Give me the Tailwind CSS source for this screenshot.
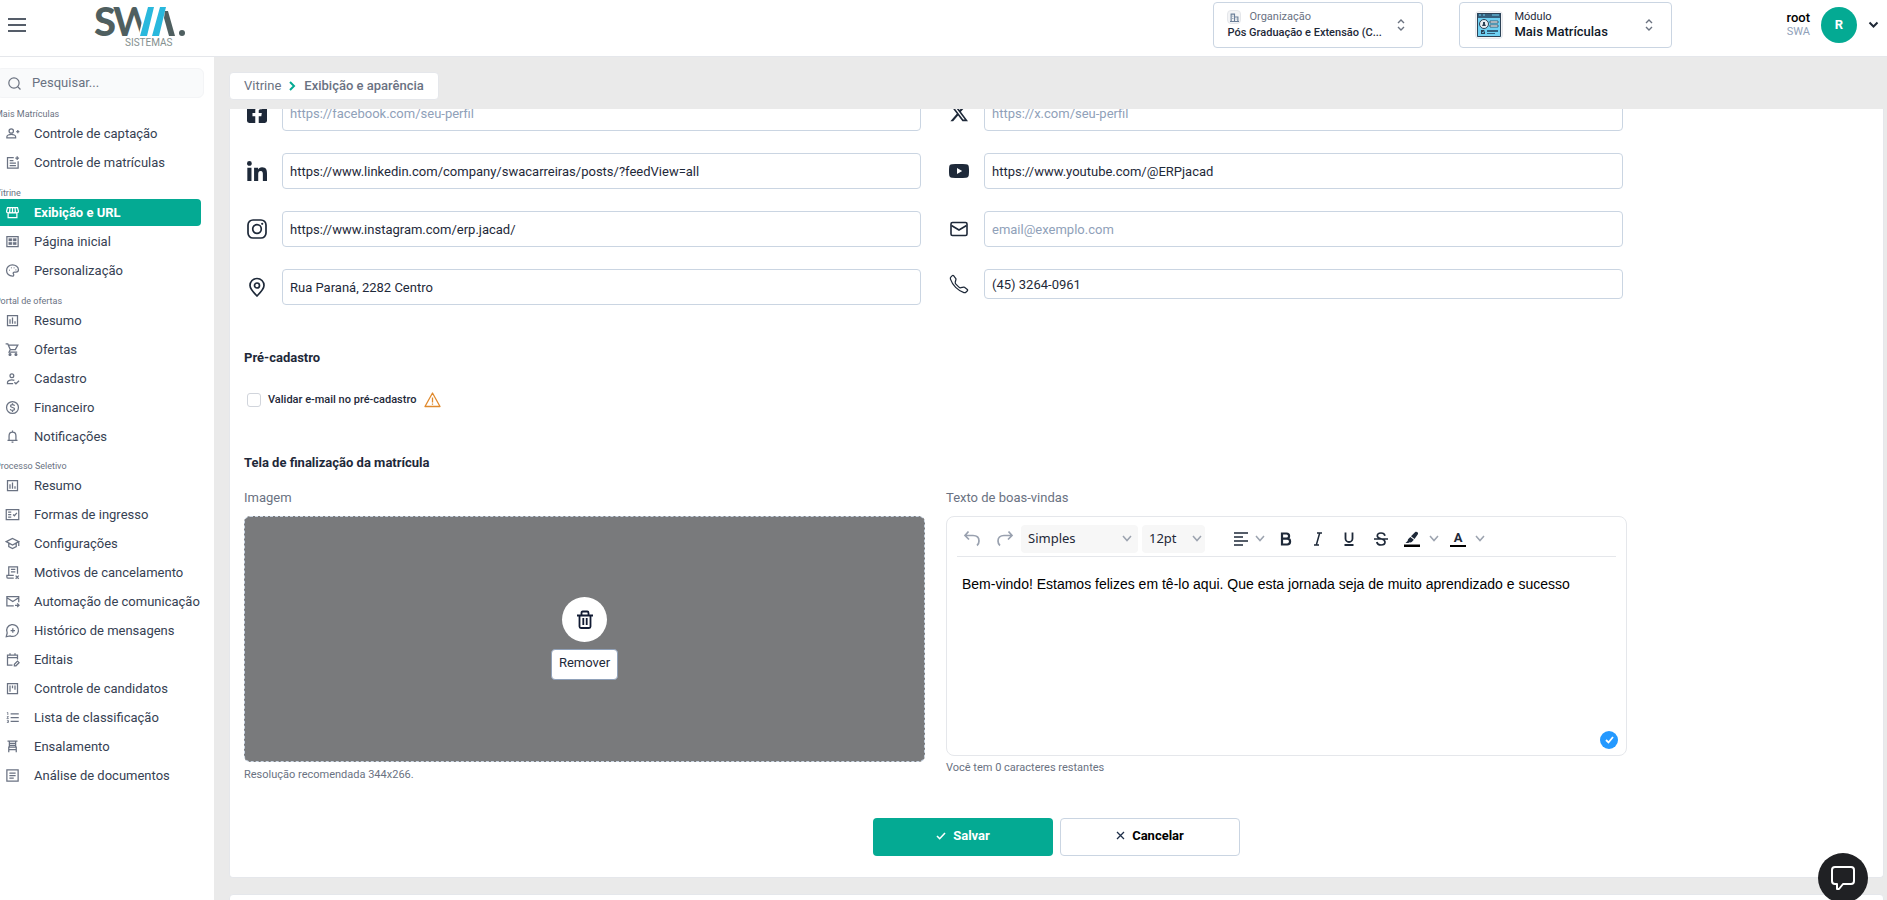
<!DOCTYPE html>
<html lang="pt-BR">
<head>
    <meta charset="UTF-8">
    <meta name="viewport" content="width=device-width, initial-scale=1.0">
    <title>Mais Matrículas - Exibição e aparência</title>

    <!-- Tailwind CSS -->
    <script src="https://cdn.jsdelivr.net/npm/@tailwindcss/browser@4"></script>
</head>
<body class="h-screen overflow-hidden flex flex-col bg-[#eaeaea] font-['Roboto',sans-serif] text-[13px] text-gray-800">

<!-- Header -->
<header class="h-[57px] shrink-0 bg-white border-b border-gray-200 flex items-start pl-2 pr-2">
    <button aria-label="Menu" class="mt-4 text-gray-800">
        <svg class="w-[18px] h-[18px]" viewBox="0 0 18 18" stroke="currentColor" stroke-width="1.5"><path d="M0 3h18M0 9h18M0 15h18"/></svg>
    </button>
    <a href="#" aria-label="SWA Sistemas" class="ml-[68px] mt-1">
        <svg class="w-[94px] h-[44px] overflow-visible" viewBox="0 0 94 44">
            <g fill="#4f5f60" font-family="Lato, sans-serif" font-weight="900">
                <text x="0" y="32" font-size="40">S</text>
                <text x="19" y="32" font-size="40" font-weight="700">W</text>
            </g>
            <path fill="#fff" d="M52 1h22l-11 33H44z"/>
            <path fill="#29b8dd" d="M54 3h6l-7 29h-7zM66 3h6l-7 29h-7z"/>
            <path fill="#4f5f60" d="M71 7l3 0 7 25h-6l-5-18z"/>
            <circle cx="88" cy="29" r="3" fill="#4f5f60"/>
            <text x="31" y="42" font-size="10" fill="#84908f" font-family="Roboto, sans-serif">SISTEMAS</text>
        </svg>
    </a>

    <button class="ml-auto mt-[2px] w-[210px] h-[46px] border border-slate-300 rounded flex items-center justify-between pl-[13px] pr-[17px] text-left">
        <span class="block">
            <span class="flex items-center gap-2 text-[11px] leading-4 text-gray-500">
                <span class="w-[14px] h-[14px] rounded-sm border border-gray-200 bg-gray-100 flex items-center justify-center">
                    <svg class="w-[9px] h-[9px]" viewBox="0 0 16 16" fill="none" stroke="#6b7f99" stroke-width="2"><path d="M2 15V2h6v13M8 7h6v8M0 15h16M5 5v1M5 9v1M11 10v1"/></svg>
                </span>
                Organização
            </span>
            <span class="block text-[11px] leading-4 font-medium text-gray-800">Pós Graduação e Extensão (C...</span>
        </span>
        <svg class="w-2 h-3" viewBox="0 0 8 12" fill="none" stroke="#6b7280" stroke-width="1.4"><path d="M1 4l3-3 3 3M1 8l3 3 3-3"/></svg>
    </button>

    <button class="ml-9 mt-[2px] w-[213px] h-[46px] border border-slate-300 rounded flex items-center pl-[15px] pr-[18px] text-left">
        <span class="w-7 h-7 rounded border border-gray-200 bg-gray-100 flex items-center justify-center">
            <svg class="w-6 h-6" viewBox="0 0 24 24">
                <rect width="24" height="24" rx="1" fill="#6fd0f2"/>
                <path d="M0 0h24v5H0z" fill="#34607d"/>
                <path d="M2 2h2M6 2h2M15 2h7" stroke="#6fd0f2"/>
                <path d="M.5.5h23v23H.5z" fill="none" stroke="#2c4256"/>
                <circle cx="7" cy="11" r="4.5" fill="#e8eef2" stroke="#2c4256"/>
                <path d="M5 13l1-2V9h2v2l1 2z" fill="#2c4256"/>
                <path d="M13 8h8v2h-8zM13 12h8v2h-8z" fill="#fff" stroke="#2c4256" stroke-width=".8"/>
                <path d="M4 17h4v4H4z" fill="#2c4256"/><path d="M5 19l1 1 2-3" fill="none" stroke="#6fd0f2" stroke-width=".8"/>
                <path d="M10 17h11v2H10zM10 20h8v1h-8z" fill="#34607d"/>
            </svg>
        </span>
        <span class="block ml-[11px] mr-auto">
            <span class="block text-[11px] leading-[14px] text-gray-800">Módulo</span>
            <span class="block text-[13px] leading-4 font-medium text-gray-900">Mais Matrículas</span>
        </span>
        <svg class="w-2 h-3" viewBox="0 0 8 12" fill="none" stroke="#6b7280" stroke-width="1.4"><path d="M1 4l3-3 3 3M1 8l3 3 3-3"/></svg>
    </button>

    <button class="ml-[114px] mt-[7px] flex items-center">
        <span class="block text-right">
            <span class="block text-[13px] leading-[14px] font-medium text-black">root</span>
            <span class="block text-[11px] leading-[14px] text-slate-400">SWA</span>
        </span>
        <span class="ml-[11px] w-9 h-9 rounded-full bg-[#04aa93] text-white font-bold flex items-center justify-center">R</span>
        <svg class="ml-[11px] w-[11px] h-2" viewBox="0 0 11 8" fill="none" stroke="#1f2937" stroke-width="2"><path d="M1.500 1.500l4 4 4-4"/></svg>
    </button>
</header>

<div class="flex flex-1 min-h-0">
    <!-- Sidebar -->
    <aside class="w-[214px] shrink-0 bg-white overflow-hidden pt-[11px]">
        <label class="-ml-1 mr-[10px] h-[30px] rounded-md border border-gray-100 bg-gray-50 flex items-center pl-[11px]">
            <svg class="w-[13px] h-[13px] shrink-0" viewBox="0 0 24 24" fill="none" stroke="#6b7280" stroke-width="2.200"><circle cx="11" cy="11" r="9.500"/><path d="M18 18l5 5"/></svg>
            <input type="text" aria-label="Pesquisar" placeholder="Pesquisar..." class="ml-[11px] w-40 bg-transparent outline-none placeholder-gray-500">
        </label>

        <nav class="mt-[11px] text-gray-700">
            <h2 class="-ml-[5px] text-[9px] leading-[11px] text-gray-500">Mais Matrículas</h2>
            <ul class="mr-[13px]">
                <li><a href="#" class="mb-[2px] h-[27px] flex items-center gap-[14px] pl-[5px]">
                    <svg class="w-[15px] h-[15px] text-gray-500" viewBox="0 0 24 24" fill="none" stroke="currentColor" stroke-width="2"><circle cx="10" cy="8" r="3.500"/><path d="M3 19v-2c0-2 4-3.500 7-3.500s7 1.500 7 3.500v2zM18 9h5M20.500 6.500v5"/></svg>
                    Controle de captação</a></li>
                <li><a href="#" class="mb-[2px] h-[27px] flex items-center gap-[14px] pl-[5px]">
                    <svg class="w-[15px] h-[15px] text-gray-500" viewBox="0 0 24 24" fill="none" stroke="currentColor" stroke-width="2"><path d="M14 4H4v17h17V10M7.500 9h6M7.500 13h10M7.500 17h10M19.500 2v6M16.500 5h6"/></svg>
                    Controle de matrículas</a></li>
            </ul>

            <h2 class="mt-3 -ml-[5px] text-[9px] leading-[11px] text-gray-500">Vitrine</h2>
            <ul class="mr-[13px]">
                <li><a href="#" class="mb-[2px] h-[27px] flex items-center gap-[14px] pl-[5px] rounded-r bg-[#04aa93] text-white font-bold">
                    <svg class="w-[15px] h-[15px]" viewBox="0 0 24 24" fill="none" stroke="currentColor" stroke-width="2"><path d="M5 12v8h14v-8M4 4h16l1.500 6c0 1.500-1 2.500-2.500 2.500S16.500 11.500 16.500 10c0 1.500-1 2.500-2.300 2.500S12 11.500 12 10c0 1.500-1 2.500-2.300 2.500S7.500 11.500 7.500 10c0 1.500-1 2.500-2.500 2.500S2.500 11.500 2.500 10zM8 4l-.500 6M12 4v6M16 4l.500 6"/></svg>
                    Exibição e URL</a></li>
                <li><a href="#" class="mb-[2px] h-[27px] flex items-center gap-[14px] pl-[5px]">
                    <svg class="w-[15px] h-[15px] text-gray-500" viewBox="0 0 24 24" fill="none" stroke="currentColor" stroke-width="2"><path d="M3 4h18v16H3z"/><path d="M6 7h5v4H6zM13 7h5v4h-5zM6 13h5v4H6zM13 13h5v4h-5z" fill="currentColor" stroke-width=".5"/></svg>
                    Página inicial</a></li>
                <li><a href="#" class="mb-[2px] h-[27px] flex items-center gap-[14px] pl-[5px]">
                    <svg class="w-[15px] h-[15px] text-gray-500" viewBox="0 0 24 24" fill="none" stroke="currentColor" stroke-width="2"><path d="M12 3C6.500 3 2.500 7 2.500 12s4 9 9.500 9c1.300 0 2-1 2-2 0-1.500-1-1.500-1-2.700s1-1.800 2-1.800h2.500c2.300 0 4-1.500 4-3.800C21.500 6.500 17 3 12 3z"/><path d="M6.500 11.500h1M9.500 7.500h1M14 7.500h1M17 11h1" stroke-width="2.600"/></svg>
                    Personalização</a></li>
            </ul>

            <h2 class="mt-3 -ml-[5px] text-[9px] leading-[11px] text-gray-500">Portal de ofertas</h2>
            <ul class="mr-[13px]">
                <li><a href="#" class="mb-[2px] h-[27px] flex items-center gap-[14px] pl-[5px]">
                    <svg class="w-[15px] h-[15px] text-gray-500" viewBox="0 0 24 24" fill="none" stroke="currentColor" stroke-width="2"><path d="M4 4h16v16H4zM8 10v7M12 7v10M16 13v4"/></svg>
                    Resumo</a></li>
                <li><a href="#" class="mb-[2px] h-[27px] flex items-center gap-[14px] pl-[5px]">
                    <svg class="w-[15px] h-[15px] text-gray-500" viewBox="0 0 24 24" fill="none" stroke="currentColor" stroke-width="2"><path d="M1 3h3.500l4 9h8L20.500 5H6M8.500 12L6.500 16h13"/><circle cx="8" cy="20" r="1.500" fill="currentColor"/><circle cx="17.500" cy="20" r="1.500" fill="currentColor"/></svg>
                    Ofertas</a></li>
                <li><a href="#" class="mb-[2px] h-[27px] flex items-center gap-[14px] pl-[5px]">
                    <svg class="w-[15px] h-[15px] text-gray-500" viewBox="0 0 24 24" fill="none" stroke="currentColor" stroke-width="2"><circle cx="11" cy="7.500" r="3"/><path d="M13 20H4v-2c0-2 3.500-3.800 7-3.800 1.500 0 3 .300 4 .800M15 18l2.500 2.500 5-5"/></svg>
                    Cadastro</a></li>
                <li><a href="#" class="mb-[2px] h-[27px] flex items-center gap-[14px] pl-[5px]">
                    <svg class="w-[15px] h-[15px] text-gray-500" viewBox="0 0 24 24" fill="none" stroke="currentColor" stroke-width="2"><circle cx="12" cy="12" r="9.500"/><path d="M15.200 9.500c-.200-1.500-1.500-2-3.200-2s-3.200.700-3.200 2.200c0 3.200 6.500 1.400 6.500 4.700 0 1.400-1.300 2.200-3.300 2.200s-3.300-.800-3.500-2.200M12 5v2.500M12 16.500V19"/></svg>
                    Financeiro</a></li>
                <li><a href="#" class="mb-[2px] h-[27px] flex items-center gap-[14px] pl-[5px]">
                    <svg class="w-[15px] h-[15px] text-gray-500" viewBox="0 0 24 24" fill="none" stroke="currentColor" stroke-width="2"><path d="M6.500 18v-7c0-3.500 2.200-6 5.500-6s5.500 2.500 5.500 6v7M4 18h16M12 2.500V5M10.500 21h3"/></svg>
                    Notificações</a></li>
            </ul>

            <h2 class="mt-[11px] -ml-[5px] text-[9px] leading-[11px] text-gray-500">Processo Seletivo</h2>
            <ul class="mr-[13px]">
                <li><a href="#" class="mb-[2px] h-[27px] flex items-center gap-[14px] pl-[5px]">
                    <svg class="w-[15px] h-[15px] text-gray-500" viewBox="0 0 24 24" fill="none" stroke="currentColor" stroke-width="2"><path d="M4 4h16v16H4zM8 10v7M12 7v10M16 13v4"/></svg>
                    Resumo</a></li>
                <li><a href="#" class="mb-[2px] h-[27px] flex items-center gap-[14px] pl-[5px]">
                    <svg class="w-[15px] h-[15px] text-gray-500" viewBox="0 0 24 24" fill="none" stroke="currentColor" stroke-width="2"><path d="M2 4h20v16H2zM5 8h5M5 12h5M5 16h5M13 12l2 2 4-4.500"/></svg>
                    Formas de ingresso</a></li>
                <li><a href="#" class="mb-[2px] h-[27px] flex items-center gap-[14px] pl-[5px]">
                    <svg class="w-[15px] h-[15px] text-gray-500" viewBox="0 0 24 24" fill="none" stroke="currentColor" stroke-width="2"><path d="M2 9l10-5 10 5-10 5.500zM6 11.500V17l6 3 6-3v-5.500M22 9v7"/></svg>
                    Configurações</a></li>
                <li><a href="#" class="mb-[2px] h-[27px] flex items-center gap-[14px] pl-[5px]">
                    <svg class="w-[15px] h-[15px] text-gray-500" viewBox="0 0 24 24" fill="none" stroke="currentColor" stroke-width="2"><path d="M6 16V3h14v11M9.500 7h7M9.500 11h7M14 21H5c-1.500 0-2-1-2-2v-2.500h11M17 17l5 5M22 17l-5 5"/></svg>
                    Motivos de cancelamento</a></li>
                <li><a href="#" class="mb-[2px] h-[27px] flex items-center gap-[14px] pl-[5px]">
                    <svg class="w-[15px] h-[15px] text-gray-500" viewBox="0 0 24 24" fill="none" stroke="currentColor" stroke-width="2"><path d="M14 19H3V4h19v9M3 6l9.500 6L22 6M16 18h6M19.500 15l3 3-3 3"/></svg>
                    Automação de comunicação</a></li>
                <li><a href="#" class="mb-[2px] h-[27px] flex items-center gap-[14px] pl-[5px]">
                    <svg class="w-[15px] h-[15px] text-gray-500" viewBox="0 0 24 24" fill="none" stroke="currentColor" stroke-width="2"><path d="M2 22l1.500-6A9.500 9.500 0 1 1 8 20.500zM12.500 8.500v7M9 12h7"/></svg>
                    Histórico de mensagens</a></li>
                <li><a href="#" class="mb-[2px] h-[27px] flex items-center gap-[14px] pl-[5px]">
                    <svg class="w-[15px] h-[15px] text-gray-500" viewBox="0 0 24 24" fill="none" stroke="currentColor" stroke-width="2"><path d="M12 21H4V5h16v7M4 9h16M8 2v4M16 2v4M15 22v-2.500l5-5 2.500 2.500-5 5z"/></svg>
                    Editais</a></li>
                <li><a href="#" class="mb-[2px] h-[27px] flex items-center gap-[14px] pl-[5px]">
                    <svg class="w-[15px] h-[15px] text-gray-500" viewBox="0 0 24 24" fill="none" stroke="currentColor" stroke-width="2"><path d="M4 4h16v16H4zM8 7v10M12 7v4.500M16 7v7"/></svg>
                    Controle de candidatos</a></li>
                <li><a href="#" class="mb-[2px] h-[27px] flex items-center gap-[14px] pl-[5px]">
                    <svg class="w-[15px] h-[15px] text-gray-500" viewBox="0 0 24 24" fill="none" stroke="currentColor" stroke-width="2"><path d="M9 6h13M9 12h13M9 18h13"/><path d="M3 4h1.500v4M3 10.500h2.500L3 13.500h3M3 16.500h2.500v3.500H3M4 18.300h1.500" stroke-width="1.300"/></svg>
                    Lista de classificação</a></li>
                <li><a href="#" class="mb-[2px] h-[27px] flex items-center gap-[14px] pl-[5px]">
                    <svg class="w-[15px] h-[15px] text-gray-500" viewBox="0 0 24 24" fill="none" stroke="currentColor" stroke-width="2"><path d="M4 3.500h16M7 3.500v6.500h10V3.500M7 7h10M5 13h14M7 10v3M17 10v3M6 13v8M18 13v8M6 17h12"/></svg>
                    Ensalamento</a></li>
                <li><a href="#" class="mb-[2px] h-[27px] flex items-center gap-[14px] pl-[5px]">
                    <svg class="w-[15px] h-[15px] text-gray-500" viewBox="0 0 24 24" fill="none" stroke="currentColor" stroke-width="2"><path d="M3 3h18v18H3zM7 8h10M7 12h10M7 16h7"/></svg>
                    Análise de documentos</a></li>
            </ul>
        </nav>
    </aside>

    <!-- Main -->
    <main class="flex-1 min-w-0 flex flex-col pl-[15px] pr-[3px] pt-[15px]">
        <nav class="self-start h-7 mb-[9px] px-[14px] bg-white border border-gray-200 rounded flex items-center gap-2 text-gray-500">
            <a href="#">Vitrine</a>
            <svg class="w-[7px] h-[10px]" viewBox="0 0 7 10" fill="none" stroke="#04aa93" stroke-width="2"><path d="M1 1l4 4-4 4"/></svg>
            <span class="font-medium">Exibição e aparência</span>
        </nav>

        <div class="flex-1 min-h-0 overflow-hidden">
            <form class="bg-white border border-t-0 border-gray-200 rounded-b px-[14px] pb-[21px]">
                <div class="mr-[242px]">
                    <!-- Social links -->
                    <div class="-mt-[14px] grid grid-cols-2 items-start gap-x-[25px] gap-y-[22px] pr-1 text-gray-800">
                        <div class="flex items-center">
                            <svg class="ml-[3px] w-5 h-5 shrink-0 text-gray-800" viewBox="0 32 448 448" fill="currentColor"><path d="M400 32H48A48 48 0 0 0 0 80v352a48 48 0 0 0 48 48h137.250V327.690h-63V256h63v-54.640c0-62.150 37-96.480 93.670-96.480 27.140 0 55.520 4.840 55.520 4.840v61h-31.270c-30.810 0-40.420 19.120-40.420 38.730V256h68.780l-11 71.690h-57.780V480H400a48 48 0 0 0 48-48V80a48 48 0 0 0-48-48z"/></svg>
                            <input type="url" aria-label="Facebook" placeholder="https://facebook.com/seu-perfil" class="ml-[15px] flex-1 min-w-0 h-9 px-[7px] border border-slate-300 rounded placeholder-slate-400">
                        </div>
                        <div class="flex items-center">
                            <svg class="ml-[3px] w-5 h-5 p-px shrink-0 text-gray-800" viewBox="0 0 16 16" fill="currentColor"><path d="M12.600.750h2.454l-5.360 6.142L16 15.250h-4.937l-3.867-5.070-4.425 5.070H.316l5.733-6.570L0 .750h5.063l3.495 4.633L12.601.750Zm-.860 13.028h1.360L4.323 2.145H2.865z"/></svg>
                            <input type="url" aria-label="X" placeholder="https://x.com/seu-perfil" class="ml-[15px] flex-1 min-w-0 h-9 px-[7px] border border-slate-300 rounded placeholder-slate-400">
                        </div>

                        <div class="flex items-center">
                            <svg class="ml-[3px] w-5 h-5 shrink-0 text-gray-800" viewBox="0 0 448 448" fill="currentColor"><path d="M100.280 448H7.400V148.900h92.880zM53.790 108.100C24.090 108.100 0 83.500 0 53.800a53.790 53.790 0 0 1 107.580 0c0 29.700-24.100 54.300-53.790 54.300zM447.900 448h-92.680V302.400c0-34.700-.700-79.200-48.290-79.200-48.290 0-55.690 37.700-55.690 76.700V448h-92.780V148.900h89.080v40.800h1.300c12.400-23.500 42.690-48.300 87.880-48.300 94 0 111.280 61.900 111.280 142.300V448z"/></svg>
                            <input type="url" aria-label="LinkedIn" value="https://www.linkedin.com/company/swacarreiras/posts/?feedView=all" class="ml-[15px] flex-1 min-w-0 h-9 px-[7px] border border-slate-300 rounded">
                        </div>
                        <div class="flex items-center">
                            <svg class="ml-[3px] w-5 h-5 shrink-0 text-gray-800" viewBox="0 0 20 20" fill="currentColor"><path fill-rule="evenodd" d="M3 3.300C7 2.800 13 2.800 17 3.300 19 3.500 19.700 4.500 19.800 6c.300 3 .300 5 0 8-.100 1.500-.800 2.500-2.800 2.700-4 .500-10 .500-14 0C1 16.500.300 15.500.200 14c-.300-3-.300-5 0-8C.300 4.500 1 3.500 3 3.300zM8 7v6l5.200-3z"/></svg>
                            <input type="url" aria-label="YouTube" value="https://www.youtube.com/@ERPjacad" class="ml-[15px] flex-1 min-w-0 h-9 px-[7px] border border-slate-300 rounded">
                        </div>

                        <div class="flex items-center">
                            <svg class="ml-[3px] w-5 h-5 shrink-0 text-gray-800" viewBox="0 0 20 20" fill="none" stroke="currentColor" stroke-width="1.700"><rect x="1" y="1" width="18" height="18" rx="5"/><circle cx="10" cy="10" r="4.300"/><circle cx="15.200" cy="4.800" r="1.100" fill="currentColor" stroke="none"/></svg>
                            <input type="url" aria-label="Instagram" value="https://www.instagram.com/erp.jacad/" class="ml-[15px] flex-1 min-w-0 h-9 px-[7px] border border-slate-300 rounded">
                        </div>
                        <div class="flex items-center">
                            <svg class="ml-[3px] w-5 h-5 shrink-0 text-gray-800" viewBox="0 0 20 20" fill="none" stroke="currentColor" stroke-width="1.600"><rect x="2" y="3.500" width="16" height="13" rx="1.500"/><path d="M2.500 6.500L10 11l7.500-4.500"/></svg>
                            <input type="email" aria-label="E-mail" placeholder="email@exemplo.com" class="ml-[15px] flex-1 min-w-0 h-9 px-[7px] border border-slate-300 rounded placeholder-slate-400">
                        </div>

                        <div class="flex items-center">
                            <svg class="ml-[3px] w-5 h-5 shrink-0 text-gray-800" viewBox="0 0 20 20" fill="none" stroke="currentColor" stroke-width="1.700"><path d="M10 19c-3.500-3.500-7-7-7-10.500C3 4.500 6 1.500 10 1.500s7 3 7 7C17 12 13.500 15.500 10 19z"/><circle cx="10" cy="8.500" r="2.500"/></svg>
                            <input type="text" aria-label="Endereço" value="Rua Paraná, 2282 Centro" class="ml-[15px] flex-1 min-w-0 h-9 px-[7px] border border-slate-300 rounded">
                        </div>
                        <div class="flex items-center">
                            <svg class="ml-[3px] w-5 h-5 shrink-0 text-gray-800" viewBox="0 0 16 16" fill="none" stroke="currentColor"><path d="M3.654 1.328a.678.678 0 0 0-1.015-.063L1.605 2.300c-.483.484-.661 1.169-.450 1.770a17.600 17.600 0 0 0 4.168 6.608 17.600 17.600 0 0 0 6.608 4.168c.601.211 1.286.033 1.770-.450l1.034-1.034a.678.678 0 0 0-.063-1.015l-2.307-1.794a.680.680 0 0 0-.580-.122l-2.190.547a1.750 1.750 0 0 1-1.657-.459L5.482 8.062a1.750 1.750 0 0 1-.460-1.657l.548-2.190a.680.680 0 0 0-.122-.580z"/></svg>
                            <input type="tel" aria-label="Telefone" value="(45) 3264-0961" class="ml-[15px] flex-1 min-w-0 h-[30px] px-[7px] border border-slate-300 rounded">
                        </div>
                    </div>

                    <h3 class="mt-[43px] leading-5 font-bold">Pré-cadastro</h3>
                    <label class="mt-[22px] h-5 pl-[3px] flex items-center text-[11px] font-medium">
                        <input type="checkbox" class="appearance-none w-[14px] h-[14px] mr-[7px] border border-gray-300 rounded-[3px] bg-white">
                        Validar e-mail no pré-cadastro
                        <svg class="ml-2 w-[17px] h-4" viewBox="0 0 17 16" fill="none" stroke="#e08a2e" stroke-width="1.300" stroke-linejoin="round"><path d="M8.500 1L16 14.500H1zM8.500 5.500v5M8.500 11.500v1.300"/></svg>
                    </label>

                    <h3 class="mt-[43px] leading-5 font-bold">Tela de finalização da matrícula</h3>
                    <div class="mt-[15px] grid grid-cols-2 gap-x-[21px]">
                        <div>
                            <div class="leading-5 text-gray-500">Imagem</div>
                            <div class="mt-2 h-[246px] rounded-md border border-dashed border-slate-300 bg-[#797a7c] flex flex-col items-center pt-[80px]">
                                <button type="button" aria-label="Remover imagem" class="w-[45px] h-[45px] rounded-full bg-white flex items-center justify-center">
                                    <svg class="w-5 h-5" viewBox="0 0 20 20" fill="none" stroke="#111b33" stroke-width="1.800"><path d="M2 5.500h16M4.500 5.500v11c0 1 .500 1.500 1.500 1.500h8c1 0 1.500-.500 1.500-1.500v-11M6.500 5V3c0-1 .300-1.500 1.300-1.500h4.400c1 0 1.300.500 1.300 1.500v2M8.300 8v7M11.700 8v7"/></svg>
                                </button>
                                <span class="mt-[7px] h-[31px] px-[7px] pt-[3px] rounded border border-slate-400 bg-white leading-5">Remover</span>
                            </div>
                            <p class="mt-[5px] text-[11px] leading-4 text-gray-500">Resolução recomendada 344x266.</p>
                        </div>

                        <div>
                            <div class="leading-5 text-gray-500">Texto de boas-vindas</div>
                            <!-- Rich text editor -->
                            <div class="mt-2 h-[240px] rounded-lg border border-gray-200 px-[10px] flex flex-col">
                                <div class="h-10 shrink-0 border-b border-gray-200 pl-[5px] pt-1 flex items-center text-gray-800">
                                    <button type="button" aria-label="Desfazer" class="text-gray-400"><svg class="w-5 h-5" viewBox="0 0 20 20" fill="none" stroke="currentColor" stroke-width="1.700"><path d="M6.500 2.500L3 6.500l4 4M3 6.500h8c4 0 6 2.500 6 5.500 0 2-.800 3.500-2 4.500"/></svg></button>
                                    <button type="button" aria-label="Refazer" class="ml-[13px] text-gray-400"><svg class="w-5 h-5" viewBox="0 0 20 20" fill="none" stroke="currentColor" stroke-width="1.700"><path d="M13.500 2.500L17 6.500l-4 4M17 6.500H9c-4 0-6 2.500-6 5.500 0 2 .800 3.500 2 4.500"/></svg></button>
                                    <label class="relative ml-[6px]">
                                        <select aria-label="Formato" class="appearance-none w-[117px] h-7 pl-[7px] rounded bg-[#f7f7f7] font-['Noto_Sans',sans-serif] text-[13px]"><option>Simples</option></select>
                                        <svg class="absolute right-[6px] top-[10px] w-[10px] h-[7px] pointer-events-none" viewBox="0 0 10 7" fill="none" stroke="#9ca3af" stroke-width="1.500"><path d="M1 1l4 4.500L9 1"/></svg>
                                    </label>
                                    <label class="relative ml-[4px]">
                                        <select aria-label="Tamanho" class="appearance-none w-[63px] h-7 pl-[7px] rounded bg-[#f7f7f7] font-['Noto_Sans',sans-serif] text-[13px]"><option>12pt</option></select>
                                        <svg class="absolute right-[3px] top-[10px] w-[10px] h-[7px] pointer-events-none" viewBox="0 0 10 7" fill="none" stroke="#9ca3af" stroke-width="1.500"><path d="M1 1l4 4.500L9 1"/></svg>
                                    </label>
                                    <button type="button" aria-label="Alinhamento" class="ml-[28px] flex items-center gap-[6px]">
                                        <svg class="w-4 h-4" viewBox="0 0 16 16" stroke="currentColor" stroke-width="1.700"><path d="M1 2h14M1 6h9M1 10h14M1 14h9"/></svg>
                                        <svg class="w-[10px] h-[7px]" viewBox="0 0 10 7" fill="none" stroke="#9ca3af" stroke-width="1.500"><path d="M1 1l4 4.500L9 1"/></svg>
                                    </button>
                                    <button type="button" aria-label="Negrito" class="ml-[13px]"><svg class="w-4 h-4" viewBox="0 0 16 16" fill="none" stroke="currentColor" stroke-width="2.200"><path d="M4 2.500h4.500a2.600 2.600 0 0 1 0 5.200H4zM4 7.700h5.200a2.900 2.900 0 0 1 0 5.800H4zM4 2v12"/></svg></button>
                                    <button type="button" aria-label="Itálico" class="ml-4"><svg class="w-4 h-4" viewBox="0 0 16 16" fill="none" stroke="currentColor" stroke-width="1.500"><path d="M7 2h5M4 14h5M9.700 2L6.300 14"/></svg></button>
                                    <button type="button" aria-label="Sublinhado" class="ml-[15px]"><svg class="w-4 h-4" viewBox="0 0 16 16" fill="none" stroke="currentColor" stroke-width="1.800"><path d="M4.500 1.500v6a3.500 3.500 0 0 0 7 0v-6M3.500 14h9"/></svg></button>
                                    <button type="button" aria-label="Tachado" class="ml-4"><svg class="w-4 h-4" viewBox="0 0 16 16" fill="none" stroke="currentColor" stroke-width="1.700"><path d="M12 4.800C11.600 3 10 2 8 2S4.300 3 4.300 5c0 3.500 7.700 2 7.700 6 0 2-1.800 3-4 3s-3.800-1-4.200-3M1 8h14"/></svg></button>
                                    <button type="button" aria-label="Cor de fundo" class="ml-[15px] flex items-center gap-[9px]">
                                        <svg class="w-4 h-4" viewBox="0 0 16 16" fill="currentColor"><path d="M0 13.500h16V16H0z" fill="#000"/><path d="M11 1.200c1.500-1.500 4 .500 2.700 2.300L10.500 8 7 5.300zM6.300 6l3.500 2.700-2 2.300c-.800.600-1.800.600-2.600.200L4.500 12H1.500l2.300-2.200c-.200-.600 0-1.400.500-1.900z"/></svg>
                                        <svg class="w-[10px] h-[7px]" viewBox="0 0 10 7" fill="none" stroke="#9ca3af" stroke-width="1.500"><path d="M1 1l4 4.500L9 1"/></svg>
                                    </button>
                                    <button type="button" aria-label="Cor do texto" class="ml-[11px] flex items-center gap-[9px]">
                                        <span class="block w-4 h-4 border-b-2 border-black text-[13px] leading-[14px] font-bold text-center">A</span>
                                        <svg class="w-[10px] h-[7px]" viewBox="0 0 10 7" fill="none" stroke="#9ca3af" stroke-width="1.500"><path d="M1 1l4 4.500L9 1"/></svg>
                                    </button>
                                </div>
                                <div contenteditable="true" aria-label="Texto de boas-vindas" class="flex-1 px-[5px] pt-[17px] font-['Liberation_Sans',sans-serif] text-[14px] leading-5 text-black outline-none">Bem-vindo! Estamos felizes em tê-lo aqui. Que esta jornada seja de muito aprendizado e sucesso</div>
                                <span class="self-end -mr-[2px] mb-[6px] w-[18px] h-[18px] rounded-full bg-[#2499ff] flex items-center justify-center">
                                    <svg class="w-[9px] h-2" viewBox="0 0 9 8" fill="none" stroke="#fff" stroke-width="1.800"><path d="M1 4l2.500 2.500L8 1"/></svg>
                                </span>
                            </div>
                            <p class="mt-1 text-[11px] leading-4 text-gray-500">Você tem 0 caracteres restantes</p>
                        </div>
                    </div>
                </div>

                <div class="mt-[35px] flex justify-center gap-[7px]">
                    <button type="submit" class="w-[180px] h-[38px] pb-[3px] rounded bg-[#04aa93] text-white font-bold flex items-center justify-center gap-[7px]">
                        <svg class="w-[10px] h-2" viewBox="0 0 10 8" fill="none" stroke="currentColor" stroke-width="1.600"><path d="M1 4l2.700 2.700L9 1"/></svg>
                        Salvar
                    </button>
                    <button type="button" class="w-[180px] h-[38px] pb-[3px] rounded border border-slate-300 bg-white text-black font-bold flex items-center justify-center gap-[7px]">
                        <svg class="w-[9px] h-[9px]" viewBox="0 0 9 9" fill="none" stroke="#1f2f49" stroke-width="1.300"><path d="M1 1l7 7M8 1L1 8"/></svg>
                        Cancelar
                    </button>
                </div>
            </form>

            <div class="mt-4 h-20 bg-white border border-gray-200 rounded"></div>
        </div>
    </main>
</div>

<!-- Chat button -->
<button aria-label="Chat" class="fixed right-[19px] -bottom-[3px] w-[50px] h-[50px] rounded-full bg-[#202124] flex items-center justify-center">
    <svg class="w-[26px] h-[26px]" viewBox="0 0 26 26" fill="none" stroke="#fff" stroke-width="2" stroke-linejoin="round"><path d="M5 2h16a3 3 0 0 1 3 3v11a3 3 0 0 1-3 3h-8l-4 5H7v-5H5a3 3 0 0 1-3-3V5a3 3 0 0 1 3-3z"/></svg>
</button>

</body>
</html>
